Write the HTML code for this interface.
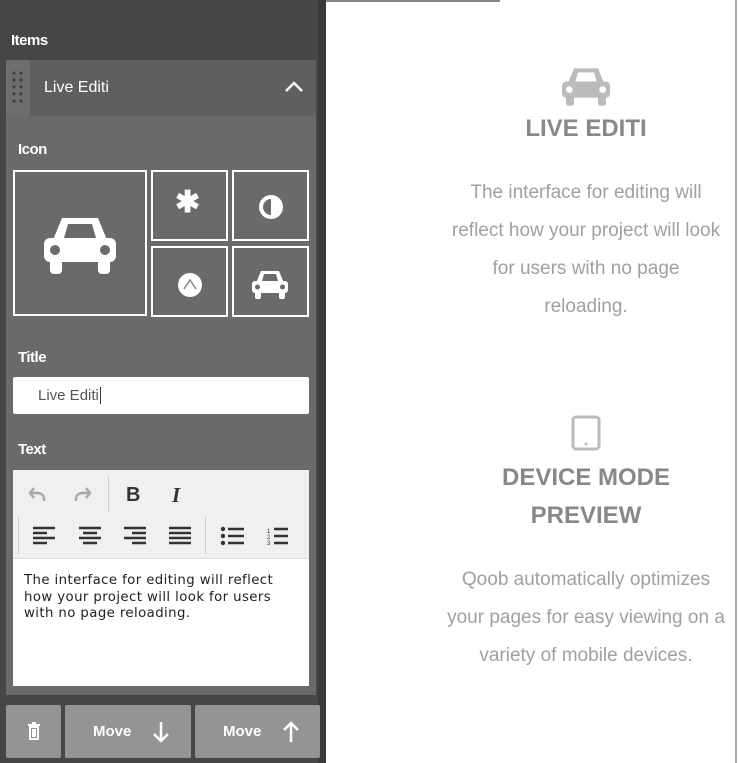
<!DOCTYPE html>
<html><head><style>
body{margin:0;width:738px;height:763px;position:relative;overflow:hidden;background:#fff;font-family:"Liberation Sans",sans-serif}
.a{position:absolute}
.lbl{color:#fff;font-weight:bold;font-size:15px;letter-spacing:-0.5px}
.ib{position:absolute;border:2px solid #fff;box-sizing:border-box;background:#6a6a6c}
.btn{position:absolute;top:705px;height:53px;background:#949496;border-radius:2px;color:#fff;font-weight:bold;font-size:15px}
.rt{position:absolute;left:406px;width:360px;text-align:center;color:#a0a0a0;font-size:19px;line-height:38px}
.hd{position:absolute;left:406px;width:360px;text-align:center;color:#888;font-weight:bold;font-size:24px;line-height:38px}
</style></head><body>
<div class="a" style="left:0;top:0;width:324px;height:763px;background:#464648"></div>
<div class="a" style="left:318px;top:0;width:8px;height:763px;background:#3a3a3c"></div>
<div class="a" style="left:326px;top:0;width:174px;height:2px;background:#888"></div>
<div class="a" style="left:735px;top:0;width:2px;height:763px;background:#aaa"></div>
<div class="a lbl" style="left:11px;top:32px">Items</div>
<div class="a" style="left:6px;top:60px;width:310px;height:56px;background:#5f5f61"></div>
<div class="a" style="left:6px;top:60px;width:24px;height:56px;background:#6e6e70"></div>
<svg class="a" style="left:10px;top:70px" width="16" height="36"><g fill="#3c3c3e"><circle cx="4" cy="3" r="1.5"/><circle cx="11" cy="3" r="1.5"/><circle cx="4" cy="10" r="1.5"/><circle cx="11" cy="10" r="1.5"/><circle cx="4" cy="17" r="1.5"/><circle cx="11" cy="17" r="1.5"/><circle cx="4" cy="24" r="1.5"/><circle cx="11" cy="24" r="1.5"/><circle cx="4" cy="31" r="1.5"/><circle cx="11" cy="31" r="1.5"/></g></svg>
<div class="a" style="left:44px;top:79px;color:#fff;font-size:16px">Live Editi</div>
<svg class="a" style="left:284px;top:80px" width="20" height="14"><path d="M2 11 L10 3 L18 11" stroke="#fff" stroke-width="2.5" fill="none"/></svg>
<div class="a" style="left:6px;top:116px;width:310px;height:579px;background:#6a6a6c"></div>
<div class="a lbl" style="left:18px;top:141px">Icon</div>
<div class="ib" style="left:13px;top:170px;width:134px;height:146px"></div>
<svg class="a" style="left:42px;top:216px" width="76" height="60" viewBox="0 0 76 60"><path fill="#fff" d="M20 2h36l9 22h-54zM26 8l-4 14h32l-4-14z" fill-rule="evenodd"/><rect x="2" y="22" width="72" height="24" rx="6" fill="#fff"/><rect x="8" y="40" width="12" height="18" rx="4" fill="#fff"/><rect x="56" y="40" width="12" height="18" rx="4" fill="#fff"/><circle cx="13" cy="34" r="5" fill="#6a6a6c"/><circle cx="63" cy="34" r="5" fill="#6a6a6c"/></svg>
<div class="ib" style="left:151px;top:170px;width:77px;height:71px"></div>
<div class="a" style="left:175px;top:188px;color:#fff;font-size:30px;font-weight:bold;line-height:30px">&#x2731;</div>
<div class="ib" style="left:232px;top:170px;width:77px;height:71px"></div>
<svg class="a" style="left:256px;top:192px" width="30" height="30"><circle cx="15" cy="15" r="12" fill="#fff"/><path d="M15 7a8 8 0 0 0 0 16z" fill="#6a6a6c"/></svg>
<div class="ib" style="left:151px;top:246px;width:77px;height:71px"></div>
<svg class="a" style="left:175px;top:270px" width="30" height="30"><circle cx="15" cy="15" r="12" fill="#fff"/><path d="M9 19l6-9 6 9" stroke="#888" stroke-width="1.5" fill="none"/></svg>
<div class="ib" style="left:232px;top:246px;width:77px;height:71px"></div>
<svg class="a" style="left:251px;top:270px" width="38" height="30" viewBox="0 0 76 60"><path fill="#fff" d="M20 2h36l9 22h-54zM26 8l-4 14h32l-4-14z" fill-rule="evenodd"/><rect x="2" y="22" width="72" height="24" rx="6" fill="#fff"/><rect x="8" y="40" width="12" height="18" rx="4" fill="#fff"/><rect x="56" y="40" width="12" height="18" rx="4" fill="#fff"/><circle cx="13" cy="34" r="5" fill="#6a6a6c"/><circle cx="63" cy="34" r="5" fill="#6a6a6c"/></svg>
<div class="a lbl" style="left:18px;top:349px">Title</div>
<div class="a" style="left:13px;top:377px;width:296px;height:37px;background:#fff;border-radius:2px"></div>
<div class="a" style="left:38px;top:387px;color:#555;font-size:15px">Live Editi<span style="border-left:1px solid #333;margin-left:1px"></span></div>
<div class="a lbl" style="left:18px;top:441px">Text</div>
<div class="a" style="left:13px;top:470px;width:296px;height:216px;background:#fff"></div>
<div class="a" style="left:13px;top:470px;width:296px;height:88px;background:#f0f0f0;border-bottom:1px solid #ddd"></div>
<div class="a" style="left:108px;top:476px;width:1px;height:36px;background:#ccc"></div>
<div class="a" style="left:18px;top:516px;width:1px;height:38px;background:#ccc"></div>
<div class="a" style="left:205px;top:516px;width:1px;height:38px;background:#ccc"></div>
<svg class="a" style="left:28px;top:485px" width="20" height="18"><path d="M6 3L2 8l4 5M2 8h8a6 6 0 0 1 6 6v2" stroke="#aaa" stroke-width="2.5" fill="none"/></svg>
<svg class="a" style="left:72px;top:485px" width="20" height="18"><path d="M14 3l4 5-4 5M18 8h-8a6 6 0 0 0-6 6v2" stroke="#aaa" stroke-width="2.5" fill="none"/></svg>
<div class="a" style="left:126px;top:484px;font-weight:bold;font-size:20px;color:#333">B</div>
<div class="a" style="left:172px;top:483px;font-weight:bold;font-style:italic;font-size:21px;color:#333;font-family:'Liberation Serif',serif">I</div>
<svg class="a" style="left:32px;top:526px" width="270" height="20"><g stroke="#333" stroke-width="2.5"><path d="M1 2h22M1 7h14M1 12h22M1 17h14"/><path d="M47 2h22M51 7h14M47 12h22M51 17h14"/><path d="M92 2h22M100 7h14M92 12h22M100 17h14"/><path d="M137 2h22M137 7h22M137 12h22M137 17h22"/><path d="M196 3h16M196 10h16M196 17h16"/><path d="M242 3h14M242 10h14M242 17h14"/></g><g fill="#333"><circle cx="191" cy="3" r="2.2"/><circle cx="191" cy="10" r="2.2"/><circle cx="191" cy="17" r="2.2"/></g><text x="235" y="7" font-size="6" fill="#333">1</text><text x="235" y="13" font-size="6" fill="#333">2</text><text x="235" y="19" font-size="6" fill="#333">3</text></svg>
<div class="a" style="left:24px;top:573px;font-family:'DejaVu Sans',sans-serif;font-size:13.3px;letter-spacing:0.4px;line-height:16.5px;color:#222;width:285px;white-space:nowrap">The interface for editing will reflect<br>how your project will look for users<br>with no page reloading.</div>
<div class="btn" style="left:6px;width:55px"><svg class="a" style="left:21px;top:17px" width="14" height="19"><path d="M1 3h12M5 1h4M3 5h8v12H3z M6 7v8M8 7v8" stroke="#fff" stroke-width="2" fill="none"/></svg></div>
<div class="btn" style="left:65px;width:126px"><span class="a" style="left:28px;top:18px">Move</span><svg class="a" style="left:86px;top:15px" width="20" height="24"><path d="M10 2v19M3 14l7 7 7-7" stroke="#fff" stroke-width="2.5" fill="none"/></svg></div>
<div class="btn" style="left:195px;width:125px"><span class="a" style="left:28px;top:18px">Move</span><svg class="a" style="left:86px;top:15px" width="20" height="24"><path d="M10 22V3M3 10l7-7 7 7" stroke="#fff" stroke-width="2.5" fill="none"/></svg></div>
<svg class="a" style="left:560px;top:67px" width="52" height="40" viewBox="0 0 76 60"><path fill="#bbb" d="M20 2h36l9 22h-54zM26 8l-4 14h32l-4-14z" fill-rule="evenodd"/><rect x="2" y="22" width="72" height="24" rx="6" fill="#bbb"/><rect x="8" y="40" width="12" height="18" rx="4" fill="#bbb"/><rect x="56" y="40" width="12" height="18" rx="4" fill="#bbb"/><circle cx="13" cy="34" r="5" fill="#fff"/><circle cx="63" cy="34" r="5" fill="#fff"/></svg>
<div class="hd" style="top:110px">LIVE EDITI</div>
<div class="rt" style="top:174px">The interface for editing will<br>reflect how your project will look<br>for users with no page<br>reloading.</div>
<svg class="a" style="left:571px;top:415px" width="30" height="36"><rect x="2" y="2" width="26" height="32" rx="3" fill="none" stroke="#bbb" stroke-width="3"/><circle cx="15" cy="29" r="1.5" fill="#bbb"/></svg>
<div class="hd" style="top:459px">DEVICE MODE<br>PREVIEW</div>
<div class="rt" style="top:561px">Qoob automatically optimizes<br>your pages for easy viewing on a<br>variety of mobile devices.</div>
</body></html>
